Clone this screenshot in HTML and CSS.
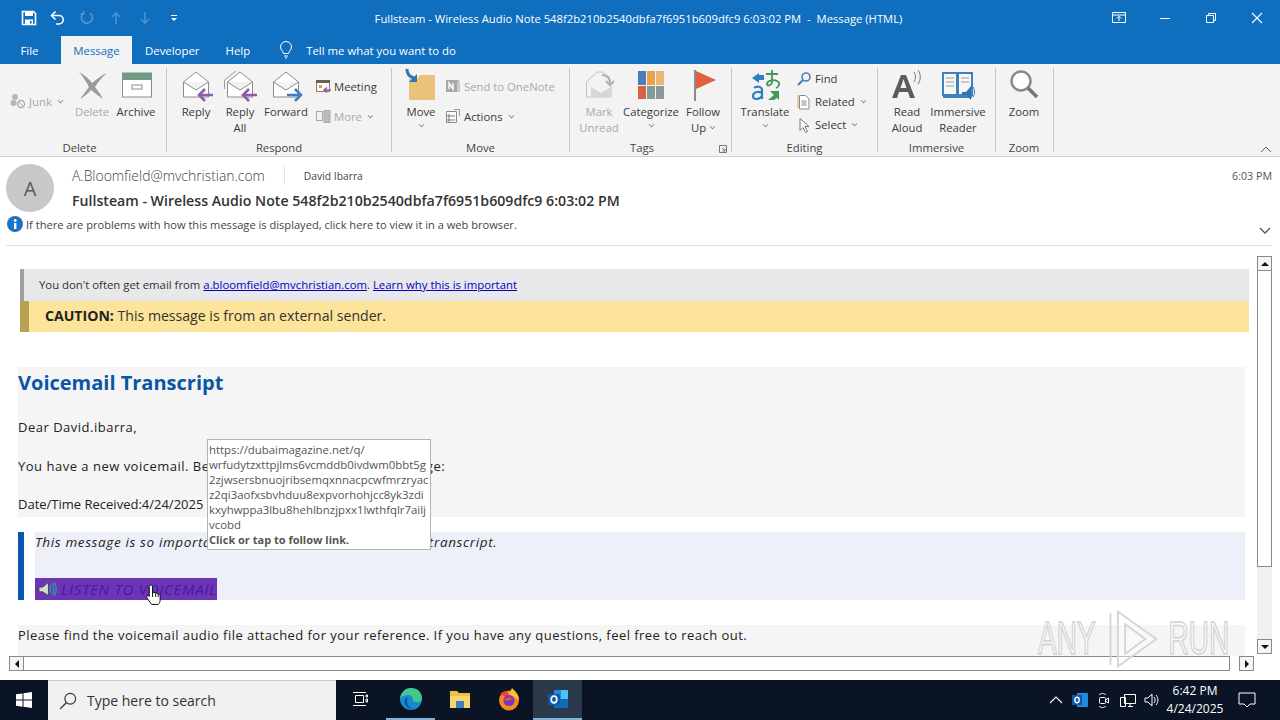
FILE: index.html
```html
<!DOCTYPE html>
<html lang="en">
<head>
    <meta charset="UTF-8">
    <title>Fullsteam - Wireless Audio Note - Message (HTML)</title>
    <link rel="stylesheet" href="styles.css">
</head>
<body>
    <div class="window">
        <!-- Title bar -->
        <div class="titlebar">
            <div class="qat">
                <svg class="qat-icon" viewBox="0 0 16 16"><path d="M1.500 1.500h11l2 2v11h-13z" fill="none" stroke="#fff" stroke-width="1.600"/><rect x="4" y="2" width="8" height="4" fill="#fff"/><rect x="4" y="9.500" width="8" height="5" fill="#fff"/><rect x="9" y="11" width="1.600" height="2.500" fill="#106ebe"/></svg>
                <svg class="qat-icon" viewBox="0 0 16 16"><path d="M5.500 1.500 1.500 5.500l4 4" fill="none" stroke="#fff" stroke-width="1.600"/><path d="M2 5.500h7a4 4 0 0 1 0 8.500H6" fill="none" stroke="#fff" stroke-width="1.600"/></svg>
                <svg class="qat-icon" viewBox="0 0 16 16"><path d="M11 3.200a5.500 5.500 0 1 1-6.500.2M4.500 1v3H1.500" fill="none" stroke="#5b9bd5" stroke-width="1.500"/></svg>
                <svg class="qat-icon" viewBox="0 0 16 16"><path d="M8 14V3M4 7l4-4 4 4" fill="none" stroke="#4a90cf" stroke-width="1.600"/></svg>
                <svg class="qat-icon" viewBox="0 0 16 16"><path d="M8 2v11M4 9l4 4 4-4" fill="none" stroke="#4a90cf" stroke-width="1.600"/></svg>
                <svg class="qat-icon" viewBox="0 0 16 16"><path d="M5 5h6v1H5zM5 8h6l-3 3z" fill="#fff"/></svg>
            </div>
            <div class="title-text">Fullsteam - Wireless Audio Note 548f2b210b2540dbfa7f6951b609dfc9 6:03:02 PM &nbsp;-&nbsp; Message (HTML)</div>
            <div class="win-buttons">
                <svg class="win-btn" viewBox="0 0 46 30"><path d="M16.500 9.500h13v10h-13zM16.500 12h13M23 18v-4.500M20.800 15.500l2.200-2.200 2.200 2.200" fill="none" stroke="#fff"/></svg>
                <svg class="win-btn" viewBox="0 0 46 30"><path d="M18 15.500h10" stroke="#fff" fill="none"/></svg>
                <svg class="win-btn" viewBox="0 0 46 30"><path d="M18.500 12.500h7v7h-7zM20.500 12.500v-2h7v7h-2" fill="none" stroke="#fff"/></svg>
                <svg class="win-btn" viewBox="0 0 46 30"><path d="M18 10l10 10M28 10 18 20" stroke="#fff" fill="none" stroke-width="1.100"/></svg>
            </div>
        </div>

        <!-- Tabs -->
        <div class="tabs">
            <span class="tab">File</span>
            <span class="tab tab-active">Message</span>
            <span class="tab">Developer</span>
            <span class="tab">Help</span>
            <svg class="bulb" viewBox="0 0 14 18"><path d="M4.500 12.500C4 10 1.500 9 1.500 6a5.500 5.500 0 0 1 11 0c0 3-2.500 4-3 6.500zM5 15h4M6 17h2" fill="none" stroke="#fff"/></svg>
            <span class="tab tell">Tell me what you want to do</span>
        </div>

        <!-- Ribbon -->
        <div class="ribbon">
            <div class="group group-delete">
                <div class="group-items">
                    <div class="small-col small-col-junk">
                        <div class="small-btn disabled">
                            <svg class="small-icon" viewBox="0 0 16 16"><circle cx="5" cy="4" r="3" fill="#b5b5b5"/><circle cx="3.500" cy="10" r="3" fill="#b5b5b5"/><circle cx="11" cy="11" r="3.500" fill="none" stroke="#aaa" stroke-width="1.300"/><path d="M8.500 8.500l5 5" stroke="#aaa"/></svg>
                            <span>Junk</span><i class="caret"></i>
                        </div>
                    </div>
                    <div class="big-btn w44 disabled">
                        <svg class="big-icon" viewBox="0 0 34 34"><path d="M4 3c6 3 10 7 13 11C22 10 27 6 32 4 27 8 23 13 20 18c3 4 6 8 8 12-5-3-9-7-12-9-3 3-7 7-11 9 3-4 6-8 9-12C11 12 8 8 4 3z" fill="#9a9a9a"/></svg>
                        <span>Delete</span>
                    </div>
                    <div class="big-btn w44">
                        <svg class="big-icon" viewBox="0 0 34 34"><rect x="3.500" y="4" width="29" height="24" fill="#fff" stroke="#8a8a8a"/><rect x="3" y="4" width="30" height="7" fill="#6f9a86"/><rect x="13" y="16" width="10" height="4" fill="none" stroke="#8a8a8a"/></svg>
                        <span>Archive</span>
                    </div>
                </div>
                <div class="group-label">Delete</div>
            </div>

            <div class="group group-respond">
                <div class="group-items">
                    <div class="big-btn w44">
                        <svg class="big-icon" viewBox="0 0 34 34"><path d="M4.500 13 17 3l12.500 10v15h-25zM4.500 13 17 21l12.500-8" fill="#fff" stroke="#8c8c8c"/><path d="M34 26H20M26 20l-6 6 6 6" fill="none" stroke="#8e5ca8" stroke-width="2.600"/></svg>
                        <span>Reply</span>
                    </div>
                    <div class="big-btn w44">
                        <svg class="big-icon" viewBox="0 0 34 34"><path d="M1.500 20V11L13 2" fill="none" stroke="#9a9a9a"/><path d="M4.500 13 17 3l12.500 10v15h-25zM4.500 13 17 21l12.500-8" fill="#fff" stroke="#8c8c8c"/><path d="M34 26H20M26 20l-6 6 6 6" fill="none" stroke="#8e5ca8" stroke-width="2.600"/></svg>
                        <span>Reply<br>All</span>
                    </div>
                    <div class="big-btn w48">
                        <svg class="big-icon" viewBox="0 0 34 34"><path d="M4.500 13 17 3l12.500 10v15h-25zM4.500 13 17 21l12.500-8" fill="#fff" stroke="#8c8c8c"/><path d="M18 26h14M26 20l6 6-6 6" fill="none" stroke="#3f7fbf" stroke-width="2.600"/></svg>
                        <span>Forward</span>
                    </div>
                    <div class="small-col small-col-2 gap5">
                        <div class="small-btn">
                            <svg class="small-icon" viewBox="0 0 16 16"><rect x="1.500" y="2.500" width="13" height="11" fill="#fff" stroke="#8a7a6a"/><rect x="1" y="2" width="14" height="3" fill="#6d5f55"/><rect x="4" y="7" width="3" height="3" fill="#e0a030"/><path d="M16 12H9M12 9.500 9 12l3 2.500" fill="none" stroke="#8e5ca8" stroke-width="1.500"/></svg>
                            <span>Meeting</span>
                        </div>
                        <div class="small-btn disabled">
                            <svg class="small-icon" viewBox="0 0 16 16"><rect x="1.500" y="3.500" width="6" height="9" fill="none" stroke="#aaa"/><rect x="9" y="2.500" width="6" height="12" fill="#bbb" stroke="#aaa"/></svg>
                            <span>More</span><i class="caret"></i>
                        </div>
                    </div>
                </div>
                <div class="group-label">Respond</div>
            </div>

            <div class="group group-move">
                <div class="group-items">
                    <div class="big-btn w44">
                        <svg class="big-icon" viewBox="0 0 34 34"><path d="M5 10h8l3-4h15v25H5z" fill="#eac27a"/><path d="M3 0c0 6 3 8 7 9" fill="none" stroke="#2f75b5" stroke-width="3"/><path d="M13 5v8H5z" fill="#2f75b5"/></svg>
                        <span>Move</span>
                        <i class="caret caret-below"></i>
                    </div>
                    <div class="small-col small-col-2 gap2">
                        <div class="small-btn disabled">
                            <svg class="small-icon" viewBox="0 0 16 16"><rect x="1" y="2" width="13" height="12" fill="#a8a8a8"/><rect x="12" y="3" width="3" height="11" fill="#ccc"/><path d="M4 11V5l4 6V5" fill="none" stroke="#fff" stroke-width="1.400"/></svg>
                            <span>Send to OneNote</span>
                        </div>
                        <div class="small-btn">
                            <svg class="small-icon" viewBox="0 0 16 16"><path d="M1.500 3.500h10v11h-10z" fill="#fff" stroke="#8a8a8a"/><path d="M3 7h2v2H3zM3 11h2v2H3zM6 8h4M6 12h4" fill="none" stroke="#777"/><path d="M9 1.500h5.500V8" fill="none" stroke="#999"/></svg>
                            <span>Actions</span><i class="caret"></i>
                        </div>
                    </div>
                </div>
                <div class="group-label">Move</div>
            </div>

            <div class="group group-tags">
                <div class="group-items">
                    <div class="big-btn w44 disabled">
                        <svg class="big-icon" viewBox="0 0 34 34"><path d="M4.500 13 15 3h6l7 6M4.500 13v15H29V17" fill="none" stroke="#c4c4c4"/><path d="M9 18l10 6 10-6v10H9z" fill="#d6d6d6"/><path d="M20 6c5 0 8 3 8 9M24 12l4 4 4-4" fill="none" stroke="#b0b0b0" stroke-width="2"/></svg>
                        <span>Mark<br>Unread</span>
                    </div>
                    <div class="big-btn w60">
                        <svg class="big-icon" viewBox="0 0 34 34"><rect x="4" y="2" width="8" height="14" fill="#4a7ebb"/><rect x="13" y="2" width="8" height="14" fill="#e8a24a"/><rect x="22" y="2" width="8" height="14" fill="#eab676"/><rect x="4" y="17" width="8" height="13" fill="#d9613f"/><rect x="13" y="17" width="8" height="13" fill="#7f9f94"/><rect x="22" y="17" width="8" height="13" fill="#8a9a9a"/></svg>
                        <span>Categorize</span>
                        <i class="caret caret-below"></i>
                    </div>
                    <div class="big-btn w44">
                        <svg class="big-icon" viewBox="0 0 34 34"><rect x="8" y="1" width="2" height="31" fill="#8a8a8a"/><path d="M10 2l20 9-20 9z" fill="#e0603f"/></svg>
                        <span>Follow<br>Up <i class="caret caret-inline"></i></span>
                    </div>
                </div>
                <div class="group-label">Tags</div>
                <svg class="launcher" viewBox="0 0 8 8"><path d="M.5.500h7v7h-7zM3 3l3 3M6 3.500V6H3.500" fill="none" stroke="#777"/></svg>
            </div>

            <div class="group group-editing">
                <div class="group-items">
                    <div class="big-btn w52">
                        <svg class="big-icon" viewBox="0 0 34 34"><path d="M4 9l7-5v10z" fill="#2f80c0"/><rect x="9" y="6" width="7" height="5" fill="#2f80c0"/><path d="M18 5h12M24 1v12c0 3-5 5-5 2s6-5 10-3 2 6-1 7" fill="none" stroke="#3f9a55" stroke-width="1.800"/><path d="M6 19c2-2 8-2 8 2v9M14 24c-4-2-9-1-9 3s6 4 9 0" fill="none" stroke="#2f80c0" stroke-width="2.200"/><path d="M22 22h9v9zM20 31l7-6 3 3-4 3z" fill="#3f9a55"/></svg>
                        <span>Translate</span>
                        <i class="caret caret-below"></i>
                    </div>
                    <div class="small-col small-col-3 gap5">
                        <div class="small-btn">
                            <svg class="small-icon" viewBox="0 0 16 16"><circle cx="10" cy="6" r="4" fill="none" stroke="#4a7ebb" stroke-width="1.600"/><path d="M7 9l-5 5" stroke="#4a7ebb" stroke-width="2.200"/></svg>
                            <span>Find</span>
                        </div>
                        <div class="small-btn">
                            <svg class="small-icon" viewBox="0 0 16 16"><path d="M3.500 1.500h6l3.500 3.500v10h-9.500z" fill="#fff" stroke="#8a8a8a"/><path d="M2 1v13" stroke="#d9a86a"/><path d="M5.500 7h5M5.500 9h5M5.500 11h5" stroke="#888"/></svg>
                            <span>Related</span><i class="caret"></i>
                        </div>
                        <div class="small-btn">
                            <svg class="small-icon" viewBox="0 0 16 16"><path d="M4 1.500v12l3-3 2.500 5 2-1-2.500-5h4z" fill="#fff" stroke="#777"/></svg>
                            <span>Select</span><i class="caret"></i>
                        </div>
                    </div>
                </div>
                <div class="group-label">Editing</div>
            </div>

            <div class="group group-immersive">
                <div class="group-items">
                    <div class="big-btn w44">
                        <svg class="big-icon" viewBox="0 0 34 34"><path d="M2 29 11 6h5l9 23h-5l-2-6H9l-2 6zM10.500 19h6L13.500 10z" fill="#5c5c5c" fill-rule="evenodd"/><path d="M24 3c2 3 2 7 0 10M28 1c3 4 3 10 0 14" fill="none" stroke="#777"/></svg>
                        <span>Read<br>Aloud</span>
                    </div>
                    <div class="big-btn w58">
                        <svg class="big-icon" viewBox="0 0 34 34"><path d="M2 4h14v22H2zM17 4h14v22H17z" fill="#f6f6f6" stroke="#3f80bf" stroke-width="2"/><path d="M5 9h8M5 13h8M5 17h8M20 9h8M20 13h8" stroke="#999"/><path d="M2 26h29v3H2z" fill="#3f80bf"/><path d="M21 23h4l5-6v14l-5-5h-4z" fill="#2f75b5"/><path d="M32 18c2 3 2 7 0 10" fill="none" stroke="#2f75b5"/></svg>
                        <span>Immersive<br>Reader</span>
                    </div>
                </div>
                <div class="group-label">Immersive</div>
            </div>

            <div class="group group-zoom">
                <div class="group-items">
                    <div class="big-btn w44">
                        <svg class="big-icon" viewBox="0 0 34 34"><circle cx="14" cy="12" r="9.500" fill="#fff" stroke="#8a8a8a" stroke-width="2.500"/><path d="M21 19l9 9" stroke="#777" stroke-width="3.500"/></svg>
                        <span>Zoom</span>
                    </div>
                </div>
                <div class="group-label">Zoom</div>
            </div>

            <svg class="collapse" viewBox="0 0 12 7"><path d="M1 6l5-5 5 5" fill="none" stroke="#666"/></svg>
        </div>

        <!-- Message header -->
        <div class="msg-header">
            <div class="avatar">A</div>
            <div class="msg-meta">
                <div class="from-row">
                    <span class="from">A.Bloomfield@mvchristian.com</span>
                    <span class="to">David Ibarra</span>
                </div>
                <div class="subject">Fullsteam - Wireless Audio Note 548f2b210b2540dbfa7f6951b609dfc9 6:03:02 PM</div>
            </div>
            <div class="sent">6:03 PM</div>
            <div class="info-row">
                <svg class="info-icon" viewBox="0 0 16 16"><circle cx="8" cy="8" r="8" fill="#1b75c4"/><rect x="7" y="7" width="2.400" height="6" fill="#fff"/><circle cx="8.200" cy="4.500" r="1.400" fill="#fff"/></svg>
                <span>If there are problems with how this message is displayed, click here to view it in a web browser.</span>
                <svg class="expand" viewBox="0 0 12 7"><path d="M1 1l5 5 5-5" fill="none" stroke="#555" stroke-width="1.300"/></svg>
            </div>
        </div>

        <!-- Reading pane -->
        <div class="pane">
            <div class="pane-main">
                <div class="pane-content">
                    <div class="notice-grey">You don't often get email from <a class="mail-link">a.bloomfield@mvchristian.com</a>. <a class="mail-link">Learn why this is important</a></div>
                    <div class="notice-yellow"><b>CAUTION:</b> This message is from an external sender.</div>

                    <div class="panel">
                        <h1 class="panel-title">Voicemail Transcript</h1>
                        <p class="line line-dear">Dear David.ibarra,</p>
                        <p class="line line-new">You have a new voicemail. Below are the details of your message:</p>
                        <p class="line line-date">Date/Time Received:4/24/2025 6:03:02 PM</p>
                    </div>

                    <div class="note">
                        <div class="note-body">
                            <p class="note-text">This message is so important that we have attached the full transcript.</p>
                            <div class="listen">
                                <svg class="speaker" viewBox="0 0 20 16"><path d="M1 6h4l6-5v14l-6-4H1z" fill="#d8d8d8" stroke="#444"/><path d="M12 4c2 2 2 6 0 8M14.500 2c3 3 3 9 0 12M17 1c3 4 3 10 0 14" fill="none" stroke="#2aa0a8" stroke-width="1.300"/></svg>
                                <span>LISTEN TO VOICEMAIL</span>
                            </div>
                        </div>
                    </div>

                    <div class="panel panel-end">
                        <p class="line">Please find the voicemail audio file attached for your reference. If you have any questions, feel free to reach out.</p>
                    </div>
                </div>
                <div class="vscroll">
                    <div class="sb-btn"><i class="tri tri-up"></i></div>
                    <div class="sb-thumb-v"></div>
                    <div class="sb-track-v"></div>
                    <div class="sb-btn"><i class="tri tri-down"></i></div>
                </div>
            </div>
            <div class="hscroll">
                <div class="sb-btn"><i class="tri tri-left"></i></div>
                <div class="sb-thumb-h"></div>
                <div class="sb-btn"><i class="tri tri-right"></i></div>
            </div>

            <div class="link-tip">https://dubaimagazine.net/q/<br>wrfudytzxttpjlms6vcmddb0ivdwm0bbt5g<br>2zjwsersbnuojribsemqxnnacpcwfmrzryac<br>z2qi3aofxsbvhduu8expvorhohjcc8yk3zdi<br>kxyhwppa3lbu8hehlbnzjpxx1lwthfqlr7ailj<br>vcobd<br><b>Click or tap to follow link.</b></div>

            <svg class="hand" viewBox="0 0 18 24"><path d="M6 1.500c1.500 0 2 1 2 2V10l1-.5c1-.5 2 0 2.300.6 1-.5 2 0 2.300.7 1-.3 2.400.2 2.400 1.700v5c0 2-1 3.500-2 4.500H7L2 15c-1-1.500.5-3 2-2l.5.500V3.500c0-1 .5-2 1.500-2z" fill="#fff" stroke="#000"/><path d="M8 10v4M11.300 10v4M14 11v3" stroke="#000"/></svg>

            <div class="watermark">
                <span class="wm-text">ANY</span>
                <svg class="wm-play" viewBox="0 0 60 64"><path d="M6 4v56M14 2l42 30-42 30zM22 16l22 16-22 16z" fill="rgba(255,255,255,.45)" stroke="#d4d4d4" stroke-width="2"/></svg>
                <span class="wm-text">RUN</span>
            </div>
        </div>

        <!-- Taskbar -->
        <div class="taskbar">
            <div class="start">
                <svg class="start-icon" viewBox="0 0 16 16"><path d="M0 2.300 6.500 1.400v6.200H0zM7.500 1.200 16 0v7.600H7.500zM0 8.600h6.500v6.100L0 13.800zM7.500 8.600H16V16l-8.500-1.200z" fill="#fff"/></svg>
            </div>
            <div class="search">
                <svg class="search-icon" viewBox="0 0 16 16"><circle cx="10" cy="6" r="4.800" fill="none" stroke="#333"/><path d="M6.500 9.500 1 15" stroke="#333" stroke-width="1.200"/></svg>
                <span>Type here to search</span>
            </div>
            <div class="task-item task-view">
                <svg class="task-icon-sm" viewBox="0 0 16 16"><path d="M3.500 4.500h8v7h-8zM1 1.500h13M1 14.500h13M14 4h1.500v2H14zM14 8h1.500v3H14z" fill="none" stroke="#fff"/></svg>
            </div>
            <div class="task-item running">
                <svg class="task-icon" viewBox="0 0 24 24"><circle cx="12" cy="12" r="11" fill="#1a8ad0"/><path d="M1 12C2 4 8 1 12 1c6 0 11 4 11 10 0 3-3 5-6 4-2 0-3-1-3-2 0-3-2-5-5-5-4 0-7 2-8 4z" fill="#3fc98a"/><path d="M9 10c-3 1-4 4-3 7s5 5 9 5c-3 0-7-3-7-7 0-2 0-4 1-5z" fill="#0c4f9e"/></svg>
            </div>
            <div class="task-item">
                <svg class="task-icon" viewBox="0 0 24 24"><path d="M2 4h7l2 2h11v15H2z" fill="#f0c040"/><rect x="2" y="9" width="20" height="12" fill="#f6d66e"/><rect x="8" y="14" width="8" height="7" fill="#3f80bf"/></svg>
            </div>
            <div class="task-item">
                <svg class="task-icon" viewBox="0 0 24 24"><circle cx="12" cy="13.500" r="10" fill="#f58a1f"/><path d="M15 1c3 3 7 6 7 12L12 7z" fill="#fbc02d"/><path d="M3 7c2-2 4-3 7-3l3 8z" fill="#e8452c"/><circle cx="12" cy="13.500" r="5.500" fill="#7a35c4"/><path d="M7 13c2-3 6-3 9-1-2 0-3 1-4 2z" fill="#f2542d"/></svg>
            </div>
            <div class="task-item task-active">
                <svg class="task-icon" viewBox="0 0 24 24"><rect x="8" y="3" width="14" height="18" rx="1" fill="#1f8ae0"/><rect x="15" y="3" width="7" height="9" fill="#4fc3f7"/><rect x="8" y="12" width="14" height="9" fill="#0f6cbd"/><rect x="2" y="7" width="12" height="11" rx="1" fill="#0a5aa8"/><ellipse cx="8" cy="12.500" rx="2.800" ry="3.300" fill="none" stroke="#fff" stroke-width="1.700"/></svg>
            </div>
            <div class="tray">
                <svg class="tray-icon" viewBox="0 0 16 16"><path d="M2 11l6-6 6 6" fill="none" stroke="#fff" stroke-width="1.200"/></svg>
                <svg class="tray-icon" viewBox="0 0 16 16"><rect x="5" y="1" width="11" height="14" fill="#1f8ae0"/><rect x="0" y="3" width="10" height="10" fill="#0a5aa8"/><ellipse cx="5" cy="8" rx="2.200" ry="2.700" fill="none" stroke="#fff" stroke-width="1.400"/></svg>
                <svg class="tray-icon" viewBox="0 0 16 16"><rect x="3.500" y="5.500" width="6" height="6" rx="1" fill="none" stroke="#fff"/><path d="M9.500 8l3-2v5l-3-2M3 3c2-2 5-2 7 0M3 14c2 2 5 2 7 0" fill="none" stroke="#fff"/></svg>
                <svg class="tray-icon" viewBox="0 0 16 16"><path d="M4.500 2.500h11v9h-11zM.5 5.500h5v9h-5zM8 14.500h5M10 11.500v3" fill="#0a1424" stroke="#fff"/></svg>
                <svg class="tray-icon" viewBox="0 0 16 16"><path d="M1 6h3l4-4v12l-4-4H1zM10 5c1.500 2 1.500 4 0 6M12 3c2.500 3 2.500 7 0 10" fill="none" stroke="#fff"/></svg>
            </div>
            <div class="clock">6:42 PM<br>4/24/2025</div>
            <div class="notify">
                <svg class="notify-icon" viewBox="0 0 18 16"><path d="M1 1h16v11h-5l-3 3-3-3H1z" fill="none" stroke="#fff"/></svg>
            </div>
        </div>
    </div>
</body>
</html>
```

FILE: styles.css
```css
* {
    box-sizing: border-box;
}

body {
    margin: 0;
    width: 1280px;
    height: 720px;
    overflow: hidden;
    font-family: "Open Sans", "Noto Sans", sans-serif;
    font-size: 12px;
    color: #3a3a3a;
    background-color: #fff;
}

.window {
    display: flex;
    flex-direction: column;
    height: 720px;
}

/* Title bar */
.titlebar {
    display: flex;
    align-items: center;
    height: 36px;
    background-color: #106ebe;
    color: #fff;
    flex-shrink: 0;
}

.qat {
    display: flex;
    align-items: center;
    gap: 13px;
    padding-left: 21px;
    width: 190px;
}

.qat-icon {
    width: 16px;
    height: 16px;
}

.title-text {
    width: 900px;
    text-align: center;
    font-size: 11.25px;
    padding-right: 3px;
    white-space: nowrap;
}

.win-buttons {
    display: flex;
    margin-left: auto;
}

.win-btn {
    width: 46px;
    height: 30px;
}

/* Tabs */
.tabs {
    display: flex;
    align-items: stretch;
    height: 28px;
    background-color: #106ebe;
    color: #fff;
    flex-shrink: 0;
}

.tab {
    display: flex;
    align-items: center;
    justify-content: center;
    padding: 0 13px;
    font-size: 11.4px;
}

.tab:first-child {
    width: 61px;
    padding-left: 10px;
    padding-right: 12px;
}

.tab-active {
    width: 71px;
    padding: 0;
    background-color: #f3f3f3;
    color: #106ebe;
}

.bulb {
    width: 14px;
    height: 18px;
    margin: 5px 0 0 16px;
}

.tell {
    padding-left: 13px;
}

/* Ribbon */
.ribbon {
    position: relative;
    display: flex;
    height: 93px;
    padding-top: 4px;
    background-color: #f3f3f3;
    border-bottom: 1px solid #d2d2d2;
    flex-shrink: 0;
}

.group {
    position: relative;
    display: flex;
    flex-direction: column;
    height: 84px;
    border-right: 1px solid #c6c6c6;
}

.group-delete { width: 167px; }
.group-respond { width: 225px; padding-left: 7px; }
.group-move { width: 178px; padding-left: 7px; }
.group-tags { width: 162px; padding-left: 7px; }
.group-editing { width: 146px; padding-left: 7px; }
.group-immersive { width: 118px; padding-left: 7px; }
.group-zoom { width: 58px; padding-left: 6px; }

.group-items {
    display: flex;
    flex: 1;
}

.group-label {
    height: 12px;
    margin-left: -7px;
    line-height: 16px;
    text-align: center;
    font-size: 11.3px;
    color: #444;
}

.group-tags .group-label {
    margin-right: 17px;
}

.big-btn {
    display: flex;
    flex-direction: column;
    align-items: center;
    text-align: center;
    line-height: 16px;
    font-size: 11.3px;
    white-space: nowrap;
}

.w44 { width: 44px; }
.w48 { width: 48px; }
.w52 { width: 52px; }
.w58 { width: 58px; }
.w60 { width: 60px; }

.big-icon {
    width: 34px;
    height: 34px;
    margin-top: 1px;
    margin-bottom: 1px;
}

.disabled {
    color: #a8a8a8;
}

.small-col {
    display: flex;
    flex-direction: column;
}

.small-col-junk {
    width: 70px;
    padding: 21px 0 0 10px;
}

.small-col-2 {
    padding-top: 3px;
}

.small-col-2 .small-btn {
    height: 30px;
}

.small-col-3 {
    margin-top: -1px;
}

.small-col-3 .small-btn {
    height: 23px;
}

.gap5 { margin-left: 5px; }
.gap2 { margin-left: 2px; }

.small-btn {
    display: flex;
    align-items: center;
    gap: 3px;
    height: 24px;
    white-space: nowrap;
    font-size: 11.3px;
}

.small-icon {
    width: 16px;
    height: 16px;
    flex-shrink: 0;
}

.caret {
    display: inline-block;
    width: 5px;
    height: 5px;
    margin: -2px 0 0 3px;
    border-right: 1px solid #777;
    border-bottom: 1px solid #777;
    transform: rotate(45deg) scale(.8);
}

.caret-below {
    margin: 2px 0 0;
}

.caret-inline {
    margin: 0 0 3px 1px;
}

.launcher {
    position: absolute;
    right: 4px;
    bottom: -1px;
    width: 8px;
    height: 8px;
}

.collapse {
    position: absolute;
    right: 8px;
    bottom: 3px;
    width: 12px;
    height: 7px;
}

/* Message header */
.msg-header {
    position: relative;
    display: grid;
    grid-template-columns: 48px 1fr auto;
    column-gap: 18px;
    height: 89px;
    margin: 0 8px 0 6px;
    padding-top: 7px;
    border-bottom: 1px solid #e0e0e0;
    flex-shrink: 0;
}

.avatar {
    display: flex;
    align-items: center;
    justify-content: center;
    width: 48px;
    height: 48px;
    border-radius: 50%;
    background-color: #c8c8c8;
    color: #5a5a5a;
    font-size: 20px;
}

.msg-meta {
    min-width: 0;
}

.from-row {
    display: flex;
    align-items: center;
    height: 22px;
}

.from {
    font-size: 13.9px;
    font-weight: 300;
    color: #444;
    padding-right: 19px;
    border-right: 1px solid #e4e4e4;
}

.to {
    font-size: 10.3px;
    color: #444;
    margin-left: 19px;
    padding-top: 1px;
}

.subject {
    margin-top: 5px;
    font-size: 14.15px;
    font-weight: 600;
    color: #333;
    white-space: nowrap;
}

.sent {
    font-size: 10.7px;
    color: #555;
    padding-top: 5px;
}

.info-row {
    grid-column: 1 / 4;
    display: flex;
    align-items: center;
    height: 18px;
    margin-top: -9px;
    padding-left: 1px;
    font-size: 11.1px;
    color: #444;
}

.info-icon {
    width: 16px;
    height: 16px;
    margin-right: 3px;
}

.expand {
    width: 12px;
    height: 7px;
    margin-left: auto;
    margin-top: 13px;
    margin-right: 1px;
}

/* Reading pane */
.pane {
    position: relative;
    display: flex;
    flex-direction: column;
    flex: 1;
    min-height: 0;
}

.pane-main {
    display: flex;
    height: 410px;
}

.pane-content {
    width: 1257px;
    overflow: hidden;
    padding-top: 23px;
}

.notice-grey {
    height: 32px;
    margin: 0 8px 0 20px;
    padding: 8px 0 0 15px;
    background-color: #e8e8ea;
    border-left: 4px solid #a0a0a0;
    font-size: 11.35px;
    color: #333;
}

.mail-link {
    color: #0000c8;
    text-decoration: underline;
}

.notice-yellow {
    height: 31px;
    margin: 0 8px 0 20px;
    padding: 5px 0 0 16px;
    background-color: #fde49b;
    border-left: 9px solid #b8a24f;
    font-size: 14.1px;
    color: #333;
}

.notice-yellow b {
    font-weight: 700;
    color: #222;
}

.panel {
    height: 150px;
    margin: 35px 12px 0 18px;
    background-color: #f5f5f5;
    overflow: hidden;
}

.panel-end {
    height: 40px;
    margin-top: 25px;
}

.panel-title {
    margin: 0;
    padding-top: 2px;
    font-size: 20px;
    line-height: 28px;
    font-weight: 700;
    color: #0a55a6;
}

.line {
    margin: 0;
    font-size: 13px;
    line-height: 20px;
    color: #222;
    white-space: nowrap;
}

.panel-end .line {
    letter-spacing: .45px;
}

.line-dear {
    margin-top: 20px;
    letter-spacing: .5px;
}

.line-new {
    margin-top: 19px;
    letter-spacing: .5px;
}

.line-date {
    margin-top: 18px;
}

.note {
    height: 68px;
    margin: 15px 12px 0 18px;
    padding-left: 11px;
    border-left: 6px solid #0a55b0;
}

.note-body {
    display: flex;
    flex-direction: column;
    height: 68px;
    background-color: #edf0f9;
}

.note-text {
    margin: 0;
    font-size: 13.5px;
    font-style: italic;
    letter-spacing: .63px;
    line-height: 20px;
    color: #222;
}

.listen {
    display: flex;
    align-items: center;
    gap: 4px;
    width: 182px;
    height: 22px;
    margin-top: auto;
    padding-left: 3px;
    background-color: #6b35b5;
    color: #4a189c;
    font-size: 15px;
    font-style: italic;
    letter-spacing: .7px;
    white-space: nowrap;
    overflow: hidden;
}

.speaker {
    width: 19px;
    height: 16px;
    flex-shrink: 0;
}

/* Scrollbars */
.vscroll {
    display: flex;
    flex-direction: column;
    width: 16px;
    height: 398px;
    margin-top: 10px;
}

.sb-btn {
    display: flex;
    align-items: center;
    justify-content: center;
    width: 15px;
    height: 15px;
    background-color: #f5f5f5;
    border: 1px solid #8a8a8a;
    flex-shrink: 0;
}

.sb-thumb-v {
    width: 15px;
    height: 296px;
    background-color: #fff;
    border: 1px solid #8a8a8a;
    border-top: none;
}

.sb-track-v {
    flex: 1;
    width: 15px;
    background-color: #f0f0f0;
}

.hscroll {
    display: flex;
    align-items: center;
    height: 15px;
    padding-left: 9px;
}

.sb-thumb-h {
    width: 1206px;
    height: 15px;
    background-color: #fff;
    border: 1px solid #8a8a8a;
    border-left: none;
}

.hscroll .sb-btn:last-child {
    margin-left: 9px;
}

.tri {
    width: 0;
    height: 0;
    border: 4px solid transparent;
}

.tri-up { border-bottom-color: #111; border-top-width: 0; }
.tri-down { border-top-color: #111; border-bottom-width: 0; }
.tri-left { border-right-color: #111; border-left-width: 0; }
.tri-right { border-left-color: #111; border-right-width: 0; }

/* Overlays on the message */
.link-tip {
    position: absolute;
    left: 207px;
    top: 193px;
    width: 224px;
    height: 111px;
    padding: 2px 0 0 1px;
    background-color: #fff;
    border: 1px solid #b4b4b4;
    font-size: 11.4px;
    line-height: 15px;
    color: #555;
    white-space: nowrap;
    overflow: hidden;
}

.link-tip b {
    color: #555;
    font-weight: 700;
    font-size: 11px;
}

.hand {
    position: absolute;
    left: 145px;
    top: 337px;
    width: 17px;
    height: 24px;
}

.watermark {
    position: absolute;
    left: 1038px;
    top: 362px;
    display: flex;
    align-items: center;
    gap: 9px;
    height: 62px;
    font-family: "Liberation Sans", sans-serif;
    font-size: 28px;
    color: rgba(255, 255, 255, .55);
    -webkit-text-stroke: 1px #d2d2d2;
}

.wm-text {
    display: inline-block;
    transform: scaleY(1.65);
}

.wm-play {
    width: 55px;
    height: 60px;
}

/* Taskbar */
.taskbar {
    display: flex;
    align-items: stretch;
    height: 40px;
    background-color: #0a1424;
    color: #fff;
    flex-shrink: 0;
}

.start {
    display: flex;
    align-items: center;
    justify-content: center;
    width: 48px;
}

.start-icon {
    width: 16px;
    height: 16px;
}

.search {
    display: flex;
    align-items: center;
    width: 288px;
    padding-left: 11px;
    background-color: #f1f1f1;
    border-top: 1px solid #c8c8c8;
    color: #333;
    font-size: 14px;
}

.search-icon {
    width: 18px;
    height: 18px;
    margin-right: 10px;
}

.task-item {
    display: flex;
    align-items: center;
    justify-content: center;
    width: 49px;
    border-bottom: 2px solid transparent;
}

.task-view {
    width: 48px;
}

.running {
    margin-left: 2px;
    border-bottom-color: #7fb4dc;
}

.task-active {
    background-color: #2b3a4a;
    border-bottom-color: #7fb4dc;
}

.task-icon {
    width: 24px;
    height: 24px;
}

.task-icon-sm {
    width: 16px;
    height: 16px;
}

.tray {
    display: flex;
    align-items: center;
    gap: 8px;
    margin-left: auto;
}

.tray-icon {
    width: 16px;
    height: 16px;
}

.clock {
    width: 70px;
    padding-top: 2px;
    text-align: center;
    font-size: 12px;
    line-height: 18px;
}

.notify {
    display: flex;
    align-items: center;
    justify-content: center;
    width: 33px;
    margin-right: 17px;
}

.notify-icon {
    width: 18px;
    height: 16px;
}
```
